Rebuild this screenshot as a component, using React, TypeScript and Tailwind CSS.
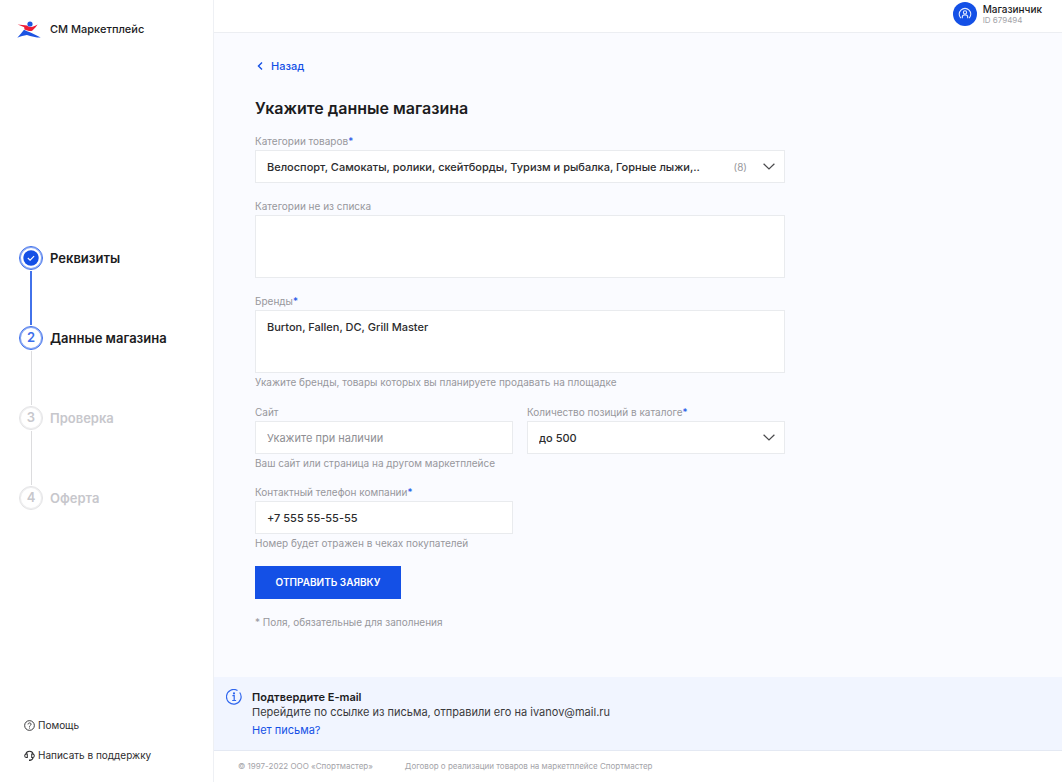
import { useState } from 'react'
import type { ReactNode } from 'react'

type StepStatus = 'done' | 'active' | 'pending'

interface Step {
  title: string
  status: StepStatus
}

const STEPS: Step[] = [
  { title: 'Реквизиты', status: 'done' },
  { title: 'Данные магазина', status: 'active' },
  { title: 'Проверка', status: 'pending' },
  { title: 'Оферта', status: 'pending' },
]

const CATEGORIES =
  'Велоспорт, Самокаты, ролики, скейтборды, Туризм и рыбалка, Горные лыжи,..'

const controlClass =
  'block w-full resize-none appearance-none rounded-none border border-[#e9ebee] bg-white px-[11px] text-[11px] font-medium text-[#2c2c2e] outline-none placeholder:font-normal placeholder:text-[#8e8e93] focus:border-[#1450e6]'

function Logo() {
  return (
    <svg viewBox="0 0 24 18" className="-ml-0.5 h-[18px] w-6 shrink-0" aria-hidden="true">
      <path
        d="M.6 3.4c3.4.3 6.400.7 9.400 1.200 1.200 1.300 3.400 1.900 5.600 1.100 1.800-.6 3.400-1.500 5-2.300-1.200 2-2.700 3.600-4.200 5-.9 1-1.700 1.700-2.900 1.700-2-.2-4.200-1-6.300-1.900.4-.9.3-1.600-.4-2.200C4.900 4.900 2.700 4.200.6 3.400z"
        fill="#ee1c35"
      />
      <circle cx="13" cy="3" r="2.6" fill="#1d54e2" />
      <path
        d="M7 8.800c2 1.200 4.200 2.100 6.500 2.600 3.500 1.500 6.900 3.200 10.200 5.200-4.900-.1-9.500-1-13.800-2.600-3.200.4-6.300 1.400-9.600 2.700C2.800 14.200 4.900 11.600 7 8.800z"
        fill="#1d54e2"
      />
    </svg>
  )
}

function Chevron() {
  return (
    <svg
      viewBox="0 0 12 7"
      className="h-[7px] w-3"
      fill="none"
      stroke="#4a4a4c"
      strokeWidth="1.2"
      aria-hidden="true"
    >
      <path d="M.6.7 6 6l5.400-5.300" />
    </svg>
  )
}

function StepMarker({ index, status }: { index: number; status: StepStatus }) {
  if (status === 'done') {
    return (
      <span className="flex size-6 items-center justify-center rounded-full border border-[#3d6fec] ring-1 ring-[#1450e6]/50 ring-inset">
        <svg viewBox="0 0 16 16" className="size-4" aria-hidden="true">
          <circle cx="8" cy="8" r="7.7" fill="#1450e6" />
          <path d="m4.800 8 2.300 2.200 4-4" fill="none" stroke="#fff" strokeWidth="1.1" />
        </svg>
      </span>
    )
  }
  const color =
    status === 'active'
      ? 'border-[#3d6fec] text-[#3d6fec] ring-[#1450e6]/50'
      : 'border-[#e3e3e5] text-[#c7c7cc] ring-[#e3e3e5]/60'
  return (
    <span
      className={`flex size-6 items-center justify-center rounded-full border text-[13px] font-semibold ring-1 ring-inset ${color}`}
    >
      {index}
    </span>
  )
}

function Steps() {
  return (
    <ol className="mt-[207px]">
      {STEPS.map((step, i) => (
        <li key={step.title} className="flex gap-[7px]">
          <div className="flex w-6 flex-col items-center">
            <StepMarker index={i + 1} status={step.status} />
            {i < STEPS.length - 1 && (
              <span
                className={`my-px h-[54px] ${
                  step.status === 'done' ? 'w-0.5 bg-[#4272ea]' : 'w-px bg-[#dcdcde]'
                }`}
              />
            )}
          </div>
          <span
            className={`text-[13px] leading-[25px] font-semibold ${
              step.status === 'pending' ? 'text-[#c7c7cc]' : 'text-[#1c1c1e]'
            }`}
          >
            {step.title}
          </span>
        </li>
      ))}
    </ol>
  )
}

function Sidebar() {
  return (
    <aside className="flex w-[214px] shrink-0 flex-col border-r border-[#eef0f4] bg-white pr-4 pl-[19px]">
      <a href="#" className="mt-5 flex h-[19px] items-center gap-[9px] text-[11px] font-medium text-[#1c1c1e]">
        <Logo />
        СМ Маркетплейс
      </a>
      <Steps />
      <nav className="mt-auto flex flex-col gap-4 pb-5 pl-[5px] text-[10px] leading-[14px] text-[#2c2c2e]">
        <a href="#" className="flex items-center gap-[3px]">
          <svg viewBox="0 0 12 12" className="size-[11px]" fill="none" stroke="currentColor" strokeWidth="1" aria-hidden="true">
            <circle cx="6" cy="6" r="5.3" />
            <path d="M4.400 4.800c0-2.100 3.300-2.100 3.300-.1 0 1.200-1.700 1.200-1.700 2.600M6 8.300v1" />
          </svg>
          Помощь
        </a>
        <a href="#" className="flex items-center gap-[3px]">
          <svg viewBox="0 0 12 12" className="size-[11px]" fill="none" stroke="currentColor" strokeWidth="1.1" aria-hidden="true">
            <path d="M2 4.500a4.100 4.100 0 0 1 8 0M10 8c-.3 2-1.500 3-3.300 3.100" />
            <path d="M3.600 4.300H2.400C.2 4.600.2 8 2.400 8.300h1.200zM8.400 4.300h1.200c2.200.3 2.200 3.700 0 4H8.400z" />
            <path d="M5.500 11.100h1.700" strokeWidth="1.6" />
          </svg>
          Написать в поддержку
        </a>
      </nav>
    </aside>
  )
}

function Header() {
  return (
    <header className="flex h-[33px] items-center justify-end border-b border-[#eceef2] bg-white pr-5 pb-1">
      <button type="button" className="flex items-center gap-1.5 text-left">
        <svg viewBox="0 0 24 24" className="size-6" fill="none" stroke="#e4ebff" strokeWidth="1.1" aria-hidden="true">
          <circle cx="12" cy="12" r="12" fill="#1450e6" stroke="none" />
          <path d="M7.800 16.200a5.800 5.800 0 1 1 8.400 0" />
          <circle cx="12" cy="10.400" r="1.6" />
          <path d="M9.300 16.200v-1.400c0-2.600 5.400-2.600 5.400 0v1.400" />
        </svg>
        <span>
          <span className="block text-[10px] leading-3 font-medium text-[#1c1c1e]">Магазинчик</span>
          <span className="block text-[8px] leading-[11px] text-[#a3a3a8]">ID 679494</span>
        </span>
      </button>
    </header>
  )
}

interface FieldProps {
  id: string
  label: string
  required?: boolean
  hint?: string
  children: ReactNode
}

function Field({ id, label, required, hint, children }: FieldProps) {
  return (
    <div className="flex flex-col gap-0.5 text-[10px] leading-[14px] text-[#97979c]">
      <label htmlFor={id}>
        {label}
        {required && <span className="text-[#1450e6]">*</span>}
      </label>
      {children}
      {hint && <p>{hint}</p>}
    </div>
  )
}

function ShopForm() {
  const [custom, setCustom] = useState('')
  const [brands, setBrands] = useState('Burton, Fallen, DC, Grill Master')
  const [site, setSite] = useState('')
  const [phone, setPhone] = useState('+7 555 55-55-55')

  return (
    <form className="flex max-w-[530px] flex-col gap-4" onSubmit={(e) => e.preventDefault()}>
      <Field id="categories" label="Категории товаров" required>
        <div className="relative">
          <select id="categories" className={`${controlClass} h-[33px] pr-[60px]`}>
            <option>{CATEGORIES}</option>
          </select>
          <span className="pointer-events-none absolute inset-y-0 right-2.5 flex items-center gap-4">
            (8)
            <Chevron />
          </span>
        </div>
      </Field>
      <Field id="custom" label="Категории не из списка">
        <textarea
          id="custom"
          value={custom}
          onChange={(e) => setCustom(e.target.value)}
          className={`${controlClass} h-[63px] py-[9px]`}
        />
      </Field>
      <Field
        id="brands"
        label="Бренды"
        required
        hint="Укажите бренды, товары которых вы планируете продавать на площадке"
      >
        <textarea
          id="brands"
          value={brands}
          onChange={(e) => setBrands(e.target.value)}
          className={`${controlClass} h-[63px] py-[9px]`}
        />
      </Field>
      <div className="grid grid-cols-2 gap-x-3.5 gap-y-[15px]">
        <Field id="site" label="Сайт" hint="Ваш сайт или страница на другом маркетплейсе">
          <input
            id="site"
            value={site}
            onChange={(e) => setSite(e.target.value)}
            placeholder="Укажите при наличии"
            className={`${controlClass} h-[33px]`}
          />
        </Field>
        <Field id="amount" label="Количество позиций в каталоге" required>
          <div className="relative">
            <select id="amount" className={`${controlClass} h-[33px] pr-8`}>
              <option>до 500</option>
            </select>
            <span className="pointer-events-none absolute inset-y-0 right-2.5 flex items-center">
              <Chevron />
            </span>
          </div>
        </Field>
        <Field
          id="phone"
          label="Контактный телефон компании"
          required
          hint="Номер будет отражен в чеках покупателей"
        >
          <input
            id="phone"
            type="tel"
            value={phone}
            onChange={(e) => setPhone(e.target.value)}
            className={`${controlClass} h-[33px]`}
          />
        </Field>
      </div>
      <button
        type="submit"
        className="h-[33px] w-[146px] bg-[#1450e6] text-[10px] font-semibold text-white uppercase hover:bg-[#1045cc]"
      >
        Отправить заявку
      </button>
      <p className="text-[10px] leading-[14px] text-[#97979c]">* Поля, обязательные для заполнения</p>
    </form>
  )
}

function EmailNotice() {
  return (
    <section className="flex gap-2.5 border-b border-[#e4e9f3] bg-[#f1f5ff] px-3 pt-3 pb-2.5 text-[11px] text-[#3a3a3c]">
      <svg viewBox="0 0 16 16" className="size-4 shrink-0" fill="none" stroke="#2f66ee" strokeWidth="1.2" aria-hidden="true">
        <path d="M11.500 1.500a7.300 7.300 0 1 0 2.200 2" />
        <path d="M6.400 6.700h1.800v4.600M6.200 11.500h3.900" />
        <circle cx="8" cy="4.400" r=".5" fill="#2f66ee" />
      </svg>
      <div>
        <h2 className="leading-4 font-semibold text-[#1c1c1e]">Подтвердите E-mail</h2>
        <p className="leading-[15px]">Перейдите по ссылке из письма, отправили его на ivanov@mail.ru</p>
        <a href="#" className="block leading-5 text-[#1450e6]">
          Нет письма?
        </a>
      </div>
    </section>
  )
}

export default function App() {
  return (
    <div className="flex min-h-screen bg-white font-['Inter','Noto_Sans',sans-serif]">
      <Sidebar />
      <div className="flex min-w-0 flex-1 flex-col">
        <Header />
        <main className="flex-1 bg-[#fafbff] px-[41px] pt-[25px] pb-[47px]">
          <a href="#" className="flex items-center gap-2 text-[11px] leading-4 font-medium text-[#1450e6]">
            <svg viewBox="0 0 6 8" className="ml-0.5 h-2 w-1.5" fill="none" stroke="currentColor" strokeWidth="1.4" aria-hidden="true">
              <path d="M5 .6 1.500 4 5 7.400" />
            </svg>
            Назад
          </a>
          <h1 className="mt-[22px] mb-3.5 text-base leading-6 font-semibold text-[#1c1c1e]">
            Укажите данные магазина
          </h1>
          <ShopForm />
        </main>
        <EmailNotice />
        <footer className="flex h-[31px] items-center gap-8 bg-white px-6 pb-px text-[8px] text-[#a3a3a8]">
          <span>© 1997-2022 ООО «Спортмастер»</span>
          <a href="#">Договор о реализации товаров на маркетплейсе Спортмастер</a>
        </footer>
      </div>
    </div>
  )
}
